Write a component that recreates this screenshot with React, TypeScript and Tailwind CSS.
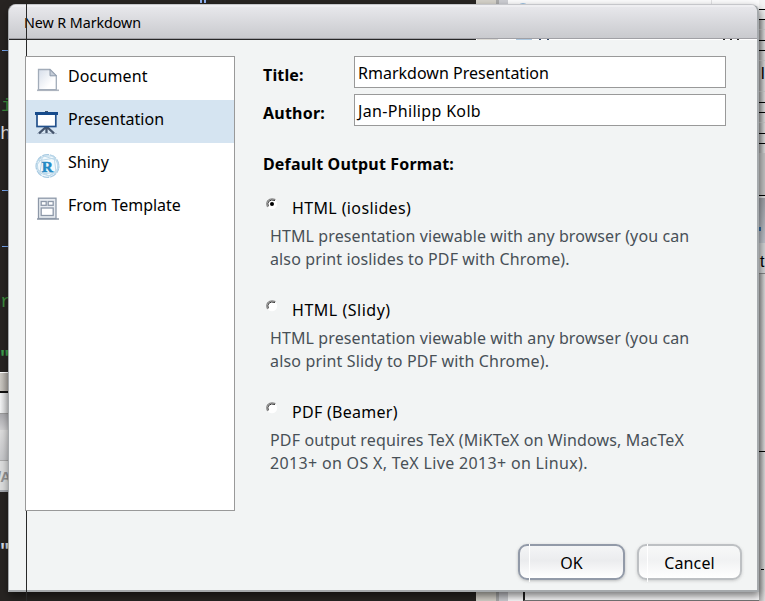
import type { ReactNode } from "react";

const formats = [
  {
    name: "HTML (ioslides)",
    style: "tracking-[0.37px]",
    lines: [
      { text: "HTML presentation viewable with any browser (you can", style: "tracking-[0.1px]" },
      { text: "also print ioslides to PDF with Chrome).", style: "tracking-[0.13px]" },
    ],
    checked: true,
  },
  {
    name: "HTML (Slidy)",
    style: "tracking-[0.52px]",
    lines: [
      { text: "HTML presentation viewable with any browser (you can", style: "tracking-[0.1px]" },
      { text: "also print Slidy to PDF with Chrome).", style: "tracking-[0.16px]" },
    ],
    checked: false,
  },
  {
    name: "PDF (Beamer)",
    style: "tracking-[0.28px]",
    lines: [
      { text: "PDF output requires TeX (MiKTeX on Windows, MacTeX", style: "tracking-[0.14px]" },
      { text: "2013+ on OS X, TeX Live 2013+ on Linux).", style: "tracking-[0.33px]" },
    ],
    checked: false,
  },
];

function DocumentIcon() {
  return (
    <svg width="24" height="24" viewBox="0 0 24 24">
      <defs>
        <linearGradient id="paper" x2="1" y2="1">
          <stop stopColor="#d6deea" />
          <stop offset=".7" stopColor="#fff" />
        </linearGradient>
      </defs>
      <path d="M2 22.3H24" stroke="#8e98a6" strokeWidth="1.6" opacity=".7" />
      <path d="M3.5 1.5H15L21.3 7.8V21.7H3.5Z" fill="url(#paper)" stroke="#a2acb9" strokeWidth="1.3" />
      <path d="M15 1.5V7.8H21.3Z" fill="#c4ccd7" stroke="#8e9aab" />
    </svg>
  );
}

function PresentationIcon() {
  return (
    <svg width="24" height="24" viewBox="0 0 24 24">
      <path d="M2 22.5H22" stroke="#94a5b9" opacity=".55" />
      <path d="M11.5 16V22M11 16L4 22.3M12 16L19 22.3" stroke="#46566e" strokeWidth="2.3" fill="none" />
      <rect x="2" y="3" width="18.8" height="12.5" fill="#fff" stroke="#23518c" strokeWidth="1.7" />
      <path d="M0 2.5H23" stroke="#174b8b" strokeWidth="3" />
      <path d="M10 .5H13" stroke="#3e536d" />
    </svg>
  );
}

function ShinyIcon() {
  return (
    <svg width="26" height="26" viewBox="0 0 26 26" className="-mt-px">
      <circle cx="12.5" cy="13" r="11.4" fill="#f3f9fd" stroke="#a9cbe3" strokeWidth="1.3" strokeDasharray="7 1" />
      <path d="M2 8L9 3L19 3L23 10L22 19L14 23L5 20L1 13L9 3L21 7L24 15L14 23L3 17L2 8L20 5M5 20L7 6M19 3L21 19L8 21" stroke="#bdd9ea" fill="none" />
      <text x="12.3" y="18.5" textAnchor="middle" fontFamily="Liberation Serif, serif" fontWeight="bold" fontSize="15.5" fill="#2589c4" stroke="#2589c4" strokeWidth=".5">R</text>
    </svg>
  );
}

function TemplateIcon() {
  return (
    <svg width="24" height="24" viewBox="0 0 24 24">
      <path d="M2 22H24" stroke="#8e98a6" strokeWidth="1.6" />
      <g stroke="#8d98a8" strokeWidth="1.3">
        <rect x="3.5" y="1.2" width="17.5" height="20.3" fill="#e7ebf0" />
        <rect x="6.2" y="4.5" width="5" height="3.8" fill="#fff" />
        <rect x="13.2" y="4.5" width="5" height="3.8" fill="#fff" />
        <rect x="6.2" y="11" width="12" height="7.5" fill="#fff" />
      </g>
    </svg>
  );
}

function Category({ icon, label, active, style }: { icon: ReactNode; label: string; active?: boolean; style: string }) {
  return (
    <div className={`flex h-[43px] shrink-0 ${active ? "bg-[#d5e4f1]" : ""}`}>
      <div className="ml-[9px] mt-[11px] w-[33px] shrink-0">{icon}</div>
      <span className={`mt-[7px] leading-6 ${style}`}>{label}</span>
    </div>
  );
}

function Radio({ checked }: { checked: boolean }) {
  return (
    <svg width="12" height="12" viewBox="0 0 12 12" className="shrink-0">
      <circle cx="6" cy="6" r="5.2" fill="#fff" />
      <path d="M1.6 9Q-.2 5.5 1.8 2.7Q4.8-.4 9.4 1.6" stroke="#888" strokeWidth="1.2" fill="none" />
      <path d="M2.4 8.3Q1.1 5.5 2.8 3.3Q5.2 1.1 9 2.5" stroke="#333" fill="none" />
      {checked && <circle cx="6" cy="6" r="2" fill="#000" />}
    </svg>
  );
}

function Field({ label, value, style, valueStyle }: { label: string; value: string; style: string; valueStyle: string }) {
  return (
    <div className="flex h-8">
      <label className={`w-[91px] shrink-0 pt-[7px] font-bold leading-6 ${style}`}>{label}</label>
      <div className={`w-[372px] border border-[#999] bg-white pl-[3px] pt-[4px] leading-6 ${valueStyle}`}>{value}</div>
    </div>
  );
}

function EditorEdge() {
  return (
    <div className="flex w-2 shrink-0 flex-col overflow-hidden font-['Liberation_Mono',monospace] text-[19px] leading-6 *:shrink-0">
      <i className="ml-[2px] mt-[50px] h-px bg-[#75a5f0]" />
      <span className="ml-px mt-[43px] h-6 text-[#3b8b3b]">i</span>
      <span className="mt-1 h-6 text-[#ddd]">h</span>
      <i className="ml-[2px] mt-[44px] h-px bg-[#75a5f0]" />
      <i className="ml-[2px] mt-[55px] h-px bg-[#75a5f0]" />
      <span className="mt-[43px] h-6 text-[#3b8b3b]">r</span>
      <span className="-ml-px mt-[32px] h-[26px] font-bold text-[#3b9b4b]">"</span>
      <div className="h-[19px] border-t border-white bg-linear-to-r from-[#cbc8c2] to-[#a9a59f]" />
      <div className="h-[2px] bg-[#111]" />
      <div className="h-[21px] border-b border-[#999] bg-linear-to-r from-[#f2f3f4] to-[#cdcecf]" />
      <div className="h-4 bg-linear-to-b from-[#aaaaae] to-[#d0d0d2]" />
      <div className="h-[31px] border-b border-[#aaa] bg-linear-to-b from-[#ddd] to-[#c6c7ca]" />
      <div className="h-[31px] border-b-2 border-[#a3a7ad] bg-[#dcdddd] pt-1 font-['Liberation_Sans',sans-serif] text-[15px] font-bold text-[#929292]">
        <span className="-ml-[3px] tracking-[-1px]">/A</span>
      </div>
      <span className="-ml-px mt-[47px] h-6 font-bold text-[#d6dce4]">"</span>
    </div>
  );
}

function ConsoleEdge() {
  return (
    <div className="flex w-[6px] shrink-0 flex-col overflow-hidden bg-linear-to-r from-[#adadad] to-[#dedede] font-['Liberation_Sans',sans-serif] text-base leading-6 *:shrink-0">
      <div className="h-[9px] bg-[#f4f4f4]" />
      <div className="h-[11px] border-y border-black bg-[#eee]" />
      <div className="mt-[9px] h-px bg-[#ccc]" />
      <div className="mt-[10px] h-[11px] border-y border-black" />
      <div className="mt-[9px] h-px bg-[#ccc]" />
      <span className="ml-[2px] mt-px h-6">l</span>
      <div className="mt-[5px] h-px bg-[#ccc]" />
      <div className="mt-[10px] h-[11px] border-y border-black" />
      <div className="mt-[9px] h-px bg-[#ccc]" />
      <div className="mt-[10px] h-[11px] border-y border-black" />
      <div className="mt-[9px] h-[42px] bg-[#c6c6c6]" />
      <div className="h-[3px] border-t border-black bg-[#ddd]" />
      <div className="flex h-[45px] items-center bg-linear-to-b from-[#a2a4aa] to-[#c1c6ce] pt-[17px]">
        <div className="h-[4px] w-[2px] bg-[#326da8]" />
      </div>
      <div className="h-[31px] border-b border-[#888] bg-[#d6d8d9] pl-px pt-[7px]">t</div>
      <div className="mt-[177px] h-px bg-black" />
      <div className="ml-[2px] mt-[117px] h-px w-[3px] bg-black" />
    </div>
  );
}

function Desktop() {
  return (
    <div className="flex h-full bg-[#272422]">
      <EditorEdge />
      <div className="flex flex-1 gap-[2px] pl-[192px]">
        <i className="h-[3px] w-[2px] bg-[#91b4f3]" />
        <i className="h-[3px] w-[2px] bg-[#91b4f3]" />
      </div>
      <div className="w-5 shrink-0 bg-[#d5d2ca]" />
      <div className="w-[3px] shrink-0 bg-[#aaa]" />
      <div className="w-[9px] shrink-0 bg-[#cdced3]" />
      <div className="flex w-[251px] shrink-0 flex-col justify-between bg-[#fcfcfd]">
        <div className="flex h-4 justify-between pl-[9px] pr-[47px]">
          <div className="mt-[3px] h-3 w-3 rounded-full bg-[#9bc2e4]" />
          <div className="w-px bg-[#e1e1e3]" />
        </div>
        <div className="ml-[15px] h-[12px] border-b border-l-2 border-b-[#777] border-l-[#222]" />
      </div>
      <ConsoleEdge />
    </div>
  );
}

function HeaderSeam() {
  return (
    <div className="flex h-px shrink-0 bg-white *:h-px">
      <i className="w-[467px] bg-[#272727]" />
      <i className="ml-px w-[21px] bg-[#dddbd5]" />
      <i className="ml-[18px] w-[16px] bg-[#acc7df]" />
      <i className="ml-[7px] w-[2px] bg-[#344969]" />
      <i className="ml-[6px] w-[2px] bg-[#344969]" />
      <i className="ml-[174px] w-[2px] bg-[#222]" />
      <i className="ml-[5px] w-[2px] bg-[#222]" />
      <i className="ml-[5px] w-[2px] bg-[#222]" />
    </div>
  );
}

export default function App() {
  return (
    <main className="relative h-[601px] w-[765px] overflow-hidden font-['Noto_Sans',sans-serif] text-[16px] text-black">
      <Desktop />
      <section className="absolute left-2 top-1 flex h-[588px] w-[751px] flex-col overflow-hidden rounded-t-[8px] border border-r-2 border-b-2 border-[#a5a9ac] border-t-[#c5c6ca] bg-[#f2f4f4] shadow-[1px_4px_9px_#0008]">
        <header className="h-[34px] shrink-0 border-b border-t-2 border-[#a0a0a5] border-t-[#eeeef1] bg-linear-to-b from-[#e7e7eb] to-[#c9cace] pl-[15px] pt-[6px] text-[14.3px] leading-5 tracking-[-0.07px]">
          New R Markdown
        </header>
        <HeaderSeam />
        <div className="flex pt-4">
          <nav className="ml-4 flex h-[455px] w-[210px] shrink-0 flex-col border border-[#999] bg-white">
            <Category icon={<DocumentIcon />} label="Document" style="tracking-[0.13px]" />
            <Category icon={<PresentationIcon />} label="Presentation" style="tracking-[0.03px]" active />
            <Category icon={<ShinyIcon />} label="Shiny" style="tracking-normal" />
            <Category icon={<TemplateIcon />} label="From Template" style="tracking-normal" />
          </nav>
          <div className="ml-[28px] flex flex-col">
            <div className="flex flex-col gap-[6px]">
              <Field label="Title:" value="Rmarkdown Presentation" style="tracking-[0.15px]" valueStyle="tracking-[0.01px]" />
              <Field label="Author:" value="Jan-Philipp Kolb" style="tracking-[0.23px]" valueStyle="tracking-[0.33px]" />
            </div>
            <h2 className="mt-[26px] font-bold leading-6 tracking-[0.16px]">Default Output Format:</h2>
            <div className="mt-5 flex flex-col gap-[32px]">
              {formats.map((format) => (
                <div key={format.name} className="h-[70px]">
                  <div className="flex h-6 gap-[14px] pl-[3px]">
                    <div className="pt-[2px]"><Radio checked={format.checked} /></div>
                    <span className={`leading-6 ${format.style}`}>{format.name}</span>
                  </div>
                  <div className="mt-[5px] pl-[7px] leading-[23px] text-[#485057]">
                    {format.lines.map((line) => <p key={line.text} className={`whitespace-nowrap ${line.style}`}>{line.text}</p>)}
                  </div>
                </div>
              ))}
            </div>
          </div>
        </div>
        <footer className="mt-[33px] flex gap-3 pl-[509px]">
          <button className="relative h-9 w-[107px] rounded-[9px] border-2 border-[#929aa8] bg-linear-to-b from-[#f4f5f6] via-[#ebecee] via-45% to-white pt-px leading-[33px] shadow-[0_1px_3px_#8888]">
            OK
            <i className="absolute -top-0.5 left-[9px] h-[38px] w-px bg-white" />
          </button>
          <button className="relative h-9 w-[105px] rounded-[9px] border-2 border-[#bdc0c3] bg-linear-to-b from-[#f7f8f8] via-[#f1f2f3] via-45% to-white pt-px leading-[33px] tracking-[0.15px] shadow-[0_1px_3px_#aaa8]">
            Cancel
            <i className="absolute -top-0.5 left-2 h-[38px] w-px bg-white" />
          </button>
        </footer>
      </section>
      <i className="absolute left-[26px] top-[4px] h-[52px] w-px bg-[#292929]" />
      <i className="absolute left-[26px] top-[511px] h-[90px] w-px bg-[#292929]" />
    </main>
  );
}
